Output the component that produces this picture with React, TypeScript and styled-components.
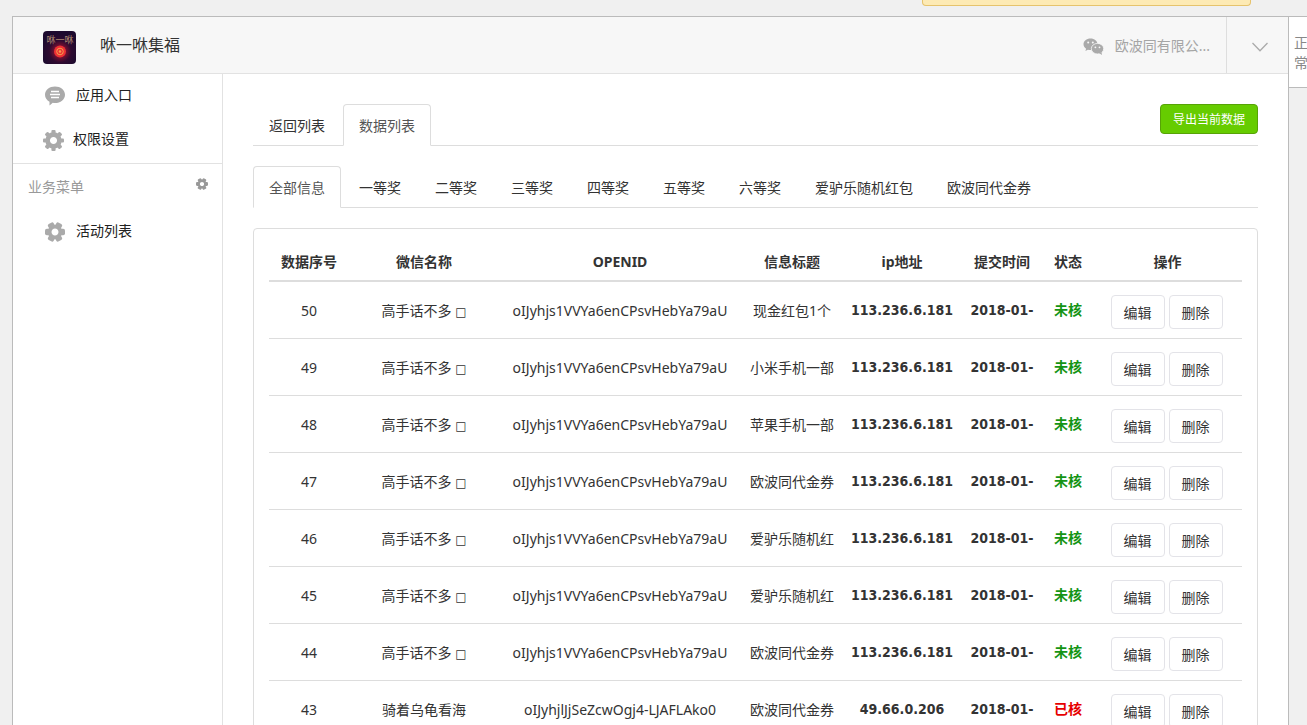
import React from 'react';
import styled, { createGlobalStyle, css } from 'styled-components';

const LINE = '#dddddd';

const GlobalStyle = createGlobalStyle`
  *, *::before, *::after { box-sizing: border-box; }
  body {
    margin: 0;
    background: #f0f0f0;
    color: #333;
    font: 14px/20px "Noto Sans", "Noto Sans CJK SC", sans-serif;
  }
  button { font-family: inherit; cursor: pointer; }
  a { color: inherit; text-decoration: none; }
`;

const Page = styled.div`
  display: flex;
  flex-direction: column;
  height: 100vh;
  overflow: hidden;
`;

const NoticeBar = styled.div`
  display: flex;
  justify-content: flex-end;
  padding-right: 56px;
  margin-bottom: 10px;
`;

const Notice = styled.div`
  width: 329px;
  height: 6px;
  background: #fdeab4;
  border: 1px solid #e6c36c;
  border-top: 0;
  border-radius: 0 0 4px 4px;
`;

const Columns = styled.div`
  flex: 1;
  display: flex;
  align-items: flex-start;
  padding-left: 12px;
`;

const Panel = styled.div`
  flex: 1;
  min-width: 0;
  background: #fff;
  border: 1px solid #bbb;
`;

const StatusTab = styled.aside`
  width: 18px;
  padding: 16px 0 14px 5px;
  overflow: hidden;
  background: #fff;
  border: solid #bbb;
  border-width: 1px 0;
  color: #888;
`;

const StatusText = styled.div`
  width: 14px;
`;

const Header = styled.header`
  display: flex;
  align-items: center;
  height: 57px;
  padding-left: 30px;
  background: #f7f7f7;
  border-bottom: 1px solid #e2e2e2;
`;

const Title = styled.h1`
  flex: 1;
  margin: 0 0 0 24px;
  font-size: 16px;
  font-weight: 400;
`;

const Account = styled.div`
  display: flex;
  align-items: center;
  gap: 11px;
  padding: 2px 16px 0 0;
  color: #a5a5a5;
`;

const ExpandButton = styled.button`
  display: flex;
  align-items: center;
  justify-content: center;
  align-self: stretch;
  width: 62px;
  padding: 4px 0 0 4px;
  background: none;
  border: 0;
  border-left: 1px solid #dedede;
`;

const Body = styled.div`
  display: flex;
`;

const Sidebar = styled.nav`
  width: 210px;
  flex-shrink: 0;
  border-right: 1px solid #e2e2e2;
`;

const MenuGroup = styled.div`
  padding-bottom: 1px;
  border-bottom: 1px solid #e2e2e2;
`;

const MenuItem = styled.a<{ $tight?: boolean }>`
  display: flex;
  align-items: center;
  gap: ${(p) => (p.$tight ? 9 : 11)}px;
  height: 44px;
  padding: 0 0 2px ${(p) => (p.$tight ? 30 : 32)}px;
  color: #222;
  svg { margin-top: 2px; }
`;

const MenuHeading = styled.div`
  display: flex;
  align-items: center;
  justify-content: space-between;
  height: 46px;
  padding: 0 14px 0 15px;
  color: #999;
`;

const IconButton = styled.button`
  display: flex;
  padding: 0 0 6px;
  background: none;
  border: 0;
`;

const Main = styled.main`
  flex: 1;
  min-width: 0;
  padding: 30px;
`;

const TabBar = styled.div`
  display: flex;
  align-items: flex-start;
  gap: 2px;
  height: 42px;
  margin-bottom: 20px;
  border-bottom: 1px solid ${LINE};
`;

const Tab = styled.a<{ $active?: boolean }>`
  padding: 11px 15px 9px;
  border: 1px solid transparent;
  border-radius: 4px 4px 0 0;
  white-space: nowrap;
  ${(p) =>
    p.$active &&
    css`
      color: #555;
      background: #fff;
      border-color: ${LINE} ${LINE} #fff;
    `}
`;

const ExportButton = styled.button`
  height: 30px;
  margin-left: auto;
  padding: 0 12px;
  background: #66cc00;
  border: 1px solid #57a306;
  border-radius: 4px;
  color: #fff;
  font-size: 12px;
`;

const Card = styled.section`
  padding: 15px;
  border: 1px solid ${LINE};
  border-radius: 4px;
`;

const Table = styled.table`
  width: 100%;
  table-layout: fixed;
  border-collapse: separate;
  border-spacing: 0;
  text-align: center;
`;

const HeadCell = styled.th`
  padding: 8px 4px;
  border-bottom: 2px solid ${LINE};
  font-weight: 700;
  white-space: nowrap;
`;

const Cell = styled.td`
  height: 57px;
  padding: 2px 4px 0;
  border-bottom: 1px solid ${LINE};
  white-space: nowrap;
`;

const StrongCell = styled(Cell)`
  padding-top: 0;
  font-family: "DejaVu Sans Condensed", "Noto Sans CJK SC", sans-serif;
  font-weight: 700;
`;

const StatusCell = styled(Cell)<{ $done: boolean }>`
  padding-top: 0;
  color: ${(p) => (p.$done ? '#e60000' : '#149414')};
  font-weight: 700;
`;

const Actions = styled.div`
  display: flex;
  justify-content: center;
  gap: 4px;
  padding: 2px 2px 0 0;
`;

const RowButton = styled.button`
  width: 54px;
  height: 34px;
  padding: 0;
  background: #fff;
  border: 1px solid #e3e3e8;
  border-radius: 4px;
  color: #333;
  font-size: 14px;
`;

const UnknownGlyph = styled.span`
  font-family: "DejaVu Sans", sans-serif;
  font-size: 12px;
  line-height: 12px;
`;

const columns: [string, number | undefined][] = [
  ['数据序号', 80],
  ['微信名称', 150],
  ['OPENID', undefined],
  ['信息标题', 102],
  ['ip地址', 118],
  ['提交时间', 82],
  ['状态', 50],
  ['操作', 149],
];

const OPENID = 'oIJyhjs1VVYa6enCPsvHebYa79aU';
const IP = '113.236.6.181';

const rows = [
  { id: 50, title: '现金红包1个' },
  { id: 49, title: '小米手机一部' },
  { id: 48, title: '苹果手机一部' },
  { id: 47, title: '欧波同代金券' },
  { id: 46, title: '爱驴乐随机红' },
  { id: 45, title: '爱驴乐随机红' },
  { id: 44, title: '欧波同代金券' },
  { id: 43, title: '欧波同代金券', name: '骑着乌龟看海', openid: 'oIJyhjlJjSeZcwOgj4-LJAFLAko0', ip: '49.66.0.206', done: true },
];

const prizeTabs = ['全部信息', '一等奖', '二等奖', '三等奖', '四等奖', '五等奖', '六等奖', '爱驴乐随机红包', '欧波同代金券'];

function Gear({ size, teeth, color = '#aaa' }: { size: number; teeth: number; color?: string }) {
  const six = teeth === 6;
  const wide = six ? 6.4 : 4;
  return (
    <svg width={size} height={size} viewBox="-10 -10 20 20" aria-hidden="true">
      <circle r={six ? 5.4 : 5.6} fill="none" stroke={color} strokeWidth={six ? 3.8 : 4.4} />
      {Array.from({ length: teeth }, (_, i) => (
        <rect key={i} x={-wide / 2} y="-10" width={wide} height="5" rx={six ? 1.8 : 1} fill={color} transform={`rotate(${(360 / teeth) * i + (six ? 30 : 0)})`} />
      ))}
    </svg>
  );
}

function ChatIcon() {
  return (
    <svg width="20" height="20" viewBox="0 0 20 20" aria-hidden="true">
      <path fill="#aaa" d="M10 0.5C15.5 0.5 20 4 20 8.7S15.500 17 10 17c-0.800 0-1.500 0-2.200-0.200L4.500 19.500V15.700C1.800 14.200 0 11.700 0 8.700 0 4 4.500 0.500 10 0.500Z" />
      <path stroke="#fff" strokeWidth="1.400" d="M6 5.500h8M5 8.500h10M6 11.500h8" />
    </svg>
  );
}

function WechatIcon() {
  return (
    <svg width="21" height="17" viewBox="0 0 21 17" aria-hidden="true">
      <path fill="#aaa" d="M7.500 0.500C3.500 0.500 0.500 3.100 0.500 6.300c0 1.900 1 3.400 2.600 4.500L2.400 13l2.500-1.300c0.900 0.200 1.700 0.400 2.600 0.400 4 0 7-2.600 7-5.800s-3-5.800-7-5.800Z" />
      <ellipse cx="14.500" cy="10.700" rx="6.200" ry="5.300" fill="#aaa" stroke="#f7f7f7" strokeWidth="0.800" />
      <path fill="#aaa" d="M16 15l3 2-0.600-3Z" />
      <g fill="#f7f7f7">
        <circle cx="5.200" cy="4.500" r="1" />
        <circle cx="9.800" cy="4.500" r="1" />
        <circle cx="12.400" cy="9.300" r="0.900" />
        <circle cx="16.500" cy="9.300" r="0.900" />
      </g>
    </svg>
  );
}

const Logo = styled.svg`
  margin-top: 4px;
`;

function AppLogo() {
  return (
    <Logo width="33" height="33" viewBox="0 0 33 33" role="img" aria-label="咻一咻">
      <defs>
        <radialGradient id="glow" cx="52%" cy="62%" r="55%">
          <stop offset="0.300" stopColor="#7a1030" />
          <stop offset="0.600" stopColor="#2f0a30" />
          <stop offset="1" stopColor="#1d0a2e" />
        </radialGradient>
      </defs>
      <rect width="33" height="33" rx="4" fill="url(#glow)" />
      <text x="17" y="12" textAnchor="middle" fontSize="9" fill="#b08c72">咻一咻</text>
      <circle cx="17" cy="20.500" r="6" fill="#ec3034" />
      <circle cx="17" cy="20.500" r="3.300" fill="none" stroke="#f5a04c" />
      <circle cx="17" cy="20.500" r="1.300" fill="#f5a04c" />
    </Logo>
  );
}

export default function App() {
  return (
    <Page>
      <GlobalStyle />
      <NoticeBar>
        <Notice />
      </NoticeBar>
      <Columns>
        <Panel>
          <Header>
            <AppLogo />
            <Title>咻一咻集福</Title>
            <Account>
              <WechatIcon />
              <span>欧波同有限公...</span>
            </Account>
            <ExpandButton aria-label="展开">
              <svg width="16" height="10" viewBox="0 0 16 10" fill="none" stroke="#aaa" strokeWidth="1.300">
                <path d="M0.500 1 8 8.800 15.500 1" />
              </svg>
            </ExpandButton>
          </Header>
          <Body>
            <Sidebar>
              <MenuGroup>
                <MenuItem href="#entry">
                  <ChatIcon />
                  应用入口
                </MenuItem>
                <MenuItem href="#access" $tight>
                  <Gear size={21} teeth={8} />
                  权限设置
                </MenuItem>
              </MenuGroup>
              <MenuHeading>
                业务菜单
                <IconButton aria-label="设置">
                  <Gear size={12} teeth={6} color="#999" />
                </IconButton>
              </MenuHeading>
              <MenuItem href="#activities">
                <Gear size={20} teeth={6} />
                活动列表
              </MenuItem>
            </Sidebar>
            <Main>
              <TabBar>
                <Tab href="#back">返回列表</Tab>
                <Tab href="#data" $active>数据列表</Tab>
                <ExportButton>导出当前数据</ExportButton>
              </TabBar>
              <TabBar>
                {prizeTabs.map((name, i) => (
                  <Tab key={name} href="#prize" $active={i === 0}>{name}</Tab>
                ))}
              </TabBar>
              <Card>
                <Table>
                  <colgroup>
                    {columns.map(([name, width]) => (
                      <col key={name} width={width} />
                    ))}
                  </colgroup>
                  <thead>
                    <tr>
                      {columns.map(([name]) => (
                        <HeadCell key={name} scope="col">{name}</HeadCell>
                      ))}
                    </tr>
                  </thead>
                  <tbody>
                    {rows.map((r) => (
                      <tr key={r.id}>
                        <Cell>{r.id}</Cell>
                        <Cell>{r.name ?? <>高手话不多 <UnknownGlyph>□</UnknownGlyph></>}</Cell>
                        <Cell>{r.openid ?? OPENID}</Cell>
                        <Cell>{r.title}</Cell>
                        <StrongCell>{r.ip ?? IP}</StrongCell>
                        <StrongCell>2018-01-</StrongCell>
                        <StatusCell $done={!!r.done}>{r.done ? '已核' : '未核'}</StatusCell>
                        <Cell>
                          <Actions>
                            <RowButton>编辑</RowButton>
                            <RowButton>删除</RowButton>
                          </Actions>
                        </Cell>
                      </tr>
                    ))}
                  </tbody>
                </Table>
              </Card>
            </Main>
          </Body>
        </Panel>
        <StatusTab>
          <StatusText>正常</StatusText>
        </StatusTab>
      </Columns>
    </Page>
  );
}
